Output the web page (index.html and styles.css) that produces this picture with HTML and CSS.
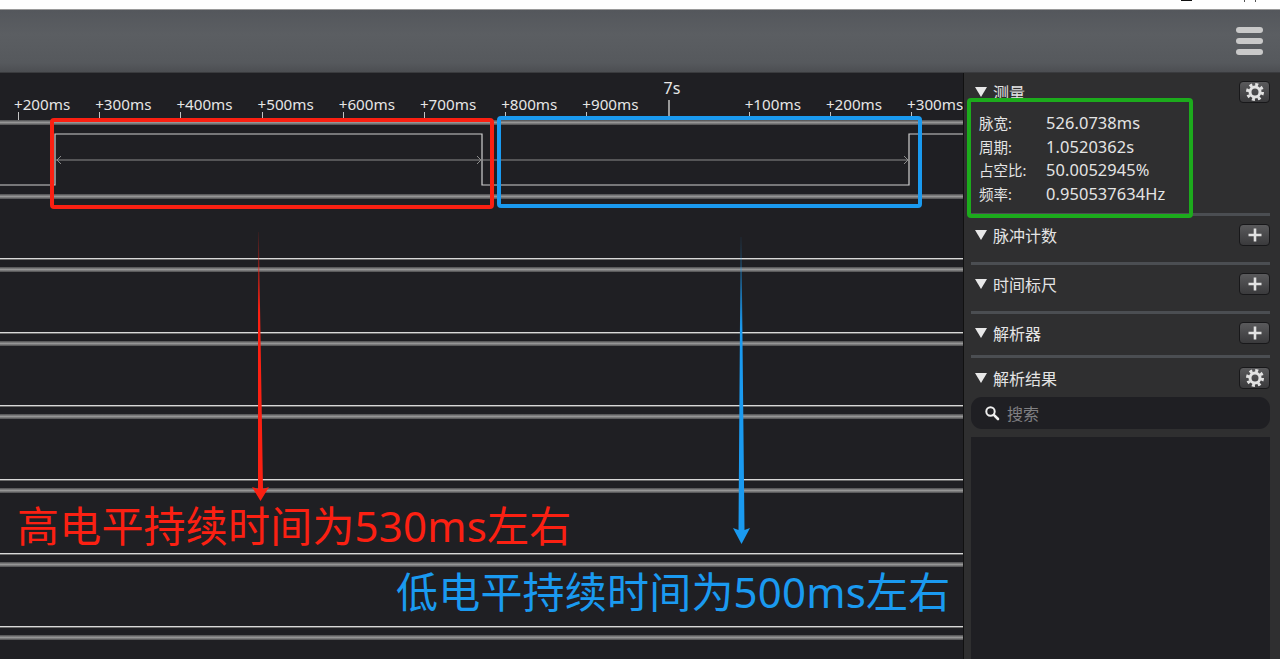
FILE: index.html
```html
<!DOCTYPE html>
<html lang="zh">
<head>
    <meta charset="UTF-8">
    <title>逻辑分析仪</title>
    <link rel="stylesheet" href="styles.css">
</head>
<body>
    <svg class="defs" width="0" height="0">
        <symbol id="gear" viewBox="0 0 20 20">
            <circle cx="10" cy="10" r="5" fill="none" stroke="currentColor" stroke-width="3"/>
            <circle cx="10" cy="10" r="7.5" fill="none" stroke="currentColor" stroke-width="3" stroke-dasharray="3 2.89"/>
        </symbol>
        <symbol id="plus" viewBox="0 0 20 20">
            <path d="M3.5 10H16.5M10 3.5V16.5" fill="none" stroke="currentColor" stroke-width="2.6"/>
        </symbol>
    </svg>

    <div class="page">
        <div class="top-strip">
            <span class="strip-mark strip-mark-wide"></span>
            <span class="strip-mark"></span>
            <span class="strip-mark"></span>
        </div>
        <header class="toolbar">
            <div class="menu-icon"><span></span><span></span><span></span></div>
        </header>

        <div class="main">
            <div class="wave-area">
                <div class="ruler">
                    <div class="tick"><span>+200ms</span></div>
                    <div class="tick"><span>+300ms</span></div>
                    <div class="tick"><span>+400ms</span></div>
                    <div class="tick"><span>+500ms</span></div>
                    <div class="tick"><span>+600ms</span></div>
                    <div class="tick"><span>+700ms</span></div>
                    <div class="tick"><span>+800ms</span></div>
                    <div class="tick"><span>+900ms</span></div>
                    <div class="tick tick-major"><span>7s</span></div>
                    <div class="tick"><span>+100ms</span></div>
                    <div class="tick"><span>+200ms</span></div>
                    <div class="tick"><span>+300ms</span></div>
                </div>

                <div class="channel">
                    <div class="band"></div>
                    <svg class="signal" viewBox="0 0 963 69" width="963" height="69">
                        <path d="M0 60H55V9H482V60H909V9H963" fill="none" stroke="#d0d0d0" stroke-width="1.2"/>
                        <path d="M56 35H909" fill="none" stroke="#8c8c8c" stroke-width="1"/>
                        <path d="M61 31L57 35L61 39M477 31L481 35L477 39M904 31L908 35L904 39" fill="none" stroke="#8c8c8c" stroke-width="1"/>
                    </svg>
                </div>
                <div class="channel"><div class="band"></div><div class="low-line"></div></div>
                <div class="channel"><div class="band"></div><div class="low-line"></div></div>
                <div class="channel"><div class="band"></div><div class="low-line"></div></div>
                <div class="channel"><div class="band"></div><div class="low-line"></div></div>
                <div class="channel"><div class="band"></div><div class="low-line"></div></div>
                <div class="channel"><div class="band"></div><div class="low-line"></div></div>
                <div class="channel"><div class="band"></div></div>
            </div>

            <aside class="sidebar">
                <section class="panel panel-measure">
                    <div class="panel-head">
                        <i class="caret"></i><h3>测量</h3>
                        <button class="icon-btn"><svg width="20" height="20"><use href="#gear"/></svg></button>
                    </div>
                    <dl class="measure-list">
                        <dt>脉宽:</dt><dd>526.0738ms</dd>
                        <dt>周期:</dt><dd>1.0520362s</dd>
                        <dt>占空比:</dt><dd>50.0052945%</dd>
                        <dt>频率:</dt><dd>0.950537634Hz</dd>
                    </dl>
                </section>
                <section class="panel panel-pulse">
                    <div class="panel-head">
                        <i class="caret"></i><h3>脉冲计数</h3>
                        <button class="icon-btn"><svg width="20" height="20"><use href="#plus"/></svg></button>
                    </div>
                </section>
                <section class="panel panel-pulse">
                    <div class="panel-head">
                        <i class="caret"></i><h3>时间标尺</h3>
                        <button class="icon-btn"><svg width="20" height="20"><use href="#plus"/></svg></button>
                    </div>
                </section>
                <section class="panel panel-decoder">
                    <div class="panel-head">
                        <i class="caret"></i><h3>解析器</h3>
                        <button class="icon-btn"><svg width="20" height="20"><use href="#plus"/></svg></button>
                    </div>
                </section>
                <section class="panel panel-results">
                    <div class="panel-head">
                        <i class="caret"></i><h3>解析结果</h3>
                        <button class="icon-btn"><svg width="20" height="20"><use href="#gear"/></svg></button>
                    </div>
                    <div class="search-box">
                        <svg width="16" height="16" viewBox="0 0 16 16"><circle cx="6.5" cy="6.5" r="4.2" fill="none" stroke="#eee" stroke-width="2"/><path d="M9.8 9.8L14 14" stroke="#eee" stroke-width="2.6" stroke-linecap="round"/></svg>
                        <span>搜索</span>
                    </div>
                    <div class="result-list"></div>
                </section>
            </aside>
        </div>

        <!-- annotations drawn on top of the screenshot -->
        <div class="note-box note-red"></div>
        <div class="note-box note-blue"></div>
        <div class="note-box note-green"></div>
        <svg class="arrows" width="1280" height="659" viewBox="0 0 1280 659">
            <defs>
                <linearGradient id="fade-red" x1="0" y1="0" x2="0" y2="1">
                    <stop offset="0" stop-color="#fb2012" stop-opacity="0.1"/>
                    <stop offset="0.3" stop-color="#fb2012"/>
                </linearGradient>
                <linearGradient id="fade-blue" x1="0" y1="0" x2="0" y2="1">
                    <stop offset="0" stop-color="#1a9af0" stop-opacity="0.1"/>
                    <stop offset="0.3" stop-color="#1a9af0"/>
                </linearGradient>
            </defs>
            <polygon points="258,232 258.8,232 263,489 269,487 260.5,501 252,487 258,489" fill="url(#fade-red)"/>
            <polygon points="740.6,237 741.4,237 744.5,530 750,528 741.5,544 733,528 738.5,530" fill="url(#fade-blue)"/>
        </svg>
        <div class="note-text note-text-red">高电平持续时间为530ms左右</div>
        <div class="note-text note-text-blue">低电平持续时间为500ms左右</div>
    </div>
</body>
</html>
```

FILE: styles.css
```css
* {
    box-sizing: border-box;
}
body {
    margin: 0;
    background-color: #fff;
    font-family: "Noto Sans", "Noto Sans CJK SC", sans-serif;
    color: #e4e4e4;
}
.defs {
    position: absolute;
}
.page {
    position: relative;
    width: 1280px;
    height: 659px;
    overflow: hidden;
    display: flex;
    flex-direction: column;
}
.top-strip {
    height: 10px;
    background: #fff;
    border-bottom: 1px solid #9a9a9a;
    display: flex;
    justify-content: flex-end;
    align-items: flex-start;
    gap: 10px;
    padding-right: 24px;
}
.strip-mark {
    width: 1px;
    height: 2px;
    background: #555;
}
.strip-mark-wide {
    width: 11px;
    height: 1px;
    background: #111;
    margin-right: 42px;
}
.toolbar {
    height: 63px;
    background: linear-gradient(#54575c, #5b5e62 40%, #56595d 85%, #4c4e52);
    border-bottom: 1px solid #3a3b3e;
    display: flex;
    justify-content: flex-end;
    align-items: center;
    padding-right: 17px;
    padding-bottom: 1px;
}
.menu-icon {
    display: flex;
    flex-direction: column;
    gap: 5px;
    width: 27px;
}
.menu-icon span {
    height: 6px;
    border-radius: 3px;
    background: #c9c9c9;
}
.main {
    flex: 1;
    display: flex;
    min-height: 0;
}

/* waveform side */
.wave-area {
    width: 963px;
    background: #1f1f23;
    overflow: hidden;
}
.ruler {
    height: 47px;
    display: flex;
    padding-left: 18px;
    align-items: flex-end;
}
.tick {
    flex: 0 0 81.2px;
    position: relative;
    height: 8px;
    border-left: 1px solid #c4c4c4;
}
.tick span {
    position: absolute;
    left: -5px;
    bottom: 7px;
    font-size: 15.2px;
    line-height: 18px;
    white-space: nowrap;
    color: #e6e6e6;
}
.tick-major {
    height: 20px;
    border-left: 2px solid #9a9a9a;
}
.tick-major span {
    left: -6px;
    bottom: 23px;
    font-size: 16px;
}
.channel {
    height: 73.6px;
    display: flex;
    flex-direction: column;
}
.band {
    flex: 0 0 5px;
    background: linear-gradient(#4c4c4e, #969696 50%, #4c4c4e);
}
.signal {
    display: block;
    flex: none;
}
.low-line {
    margin-top: auto;
    margin-bottom: 8px;
    height: 1px;
    background: #d8d8d8;
    box-shadow: 0 1px 0 #6a6a6a;
}

/* right panel */
.sidebar {
    width: 317px;
    background: #2f2f30;
    border-left: 1px solid #111;
    padding: 0 10px 0 7px;
    display: flex;
    flex-direction: column;
}
.panel {
    border-bottom: 3px solid #4b4e52;
}
.panel-measure {
    height: 143px;
    padding-top: 8px;
}
.panel-pulse {
    height: 49px;
}
.panel-decoder {
    height: 44px;
}
.panel-results {
    flex: 1;
    border-bottom: 0;
    display: flex;
    flex-direction: column;
}
.panel-head {
    display: flex;
    align-items: center;
    height: 22px;
    margin-top: 8px;
    padding-left: 4px;
}
.panel-measure .panel-head {
    margin-top: 0;
}
.panel-results .panel-head {
    margin-top: 9px;
}
.caret {
    width: 0;
    height: 0;
    border-left: 6px solid transparent;
    border-right: 6px solid transparent;
    border-top: 10px solid #e8e8e8;
    margin-right: 6px;
}
.panel-head h3 {
    margin: 0;
    font-size: 16px;
    font-weight: 400;
    flex: 1;
}
.icon-btn {
    width: 31px;
    height: 22px;
    padding: 0;
    border: 1px solid #18181a;
    border-radius: 4px;
    background: linear-gradient(#5a5a5c, #3a3a3c);
    color: #e2e2e2;
    display: flex;
    align-items: center;
    justify-content: center;
}
.measure-list {
    margin: 8px 0 0 8px;
    display: grid;
    grid-template-columns: 67px 1fr;
    grid-auto-rows: 23.6px;
    align-items: center;
}
.measure-list dt {
    font-size: 14.5px;
}
.measure-list dd {
    margin: 0;
    font-size: 16.4px;
    letter-spacing: 0.1px;
}
.search-box {
    height: 32px;
    margin-top: 8px;
    border-radius: 11px;
    background: #1f1f23;
    display: flex;
    align-items: center;
    gap: 7px;
    padding-left: 13px;
    font-size: 16px;
    color: #808083;
}
.result-list {
    flex: 1;
    margin-top: 8px;
    background: #1f1f23;
}

/* annotations */
.note-box {
    position: absolute;
    border: 4px solid;
    border-radius: 4px;
}
.note-red {
    left: 50px;
    top: 118px;
    width: 444px;
    height: 91px;
    border-color: #fb2012;
}
.note-blue {
    left: 497px;
    top: 116px;
    width: 425px;
    height: 92px;
    border-color: #1a9af0;
}
.note-green {
    left: 967px;
    top: 98px;
    width: 226px;
    height: 120px;
    border-color: #1cab1c;
}
.arrows {
    position: absolute;
    left: 0;
    top: 0;
}
.note-text {
    position: absolute;
    font-size: 42px;
    line-height: 50px;
    letter-spacing: 0.2px;
    white-space: nowrap;
}
.note-text-red {
    left: 17px;
    top: 501px;
    color: #fb2012;
}
.note-text-blue {
    left: 396px;
    top: 567px;
    color: #1a9af0;
}
```
